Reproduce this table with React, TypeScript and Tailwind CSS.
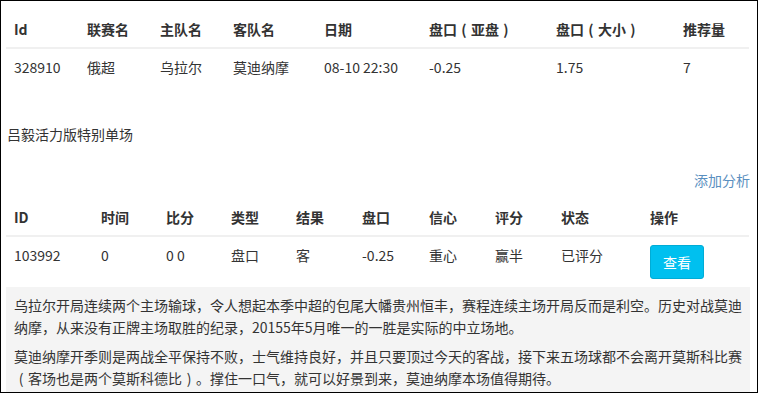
import React from "react";

const P = ({ c }: { c: string }) => (
  <span className="inline-block w-[1em] text-center">{c}</span>
);

const t1Cols = [73, 73, 73, 91, 105, 127, 127, 74];
const t1Head: React.ReactNode[] = [
  "Id",
  "联赛名",
  "主队名",
  "客队名",
  "日期",
  <>
    盘口<P c="(" />亚盘<P c=")" />
  </>,
  <>
    盘口<P c="(" />大小<P c=")" />
  </>,
  "推荐量",
];
const t1Row = ["328910", "俄超", "乌拉尔", "莫迪纳摩", "08-10 22:30", "-0.25", "1.75", "7"];

const t2Cols = [87, 65, 65, 65, 66, 67, 66, 66, 89, 107];
const t2Head = ["ID", "时间", "比分", "类型", "结果", "盘口", "信心", "评分", "状态", "操作"];
const t2Row = ["103992", "0", "0 0", "盘口", "客", "-0.25", "重心", "赢半", "已评分"];

export default function App() {
  return (
    <div className="h-[393px] w-[758px] overflow-hidden border border-black bg-white pl-[5px] pr-[7px] font-['Noto_Sans_CJK_SC',sans-serif] text-[14px] leading-5 text-[#333]">
      <table className="mt-[10px] w-[743px] table-fixed border-collapse">
        <colgroup>
          {t1Cols.map((w, i) => (
            <col key={i} style={{ width: w }} />
          ))}
        </colgroup>
        <thead>
          <tr className="border-b-2 border-[#f0f0f0]">
            {t1Head.map((h, i) => (
              <th key={i} className="whitespace-nowrap p-2 text-left font-bold">
                {h}
              </th>
            ))}
          </tr>
        </thead>
        <tbody>
          <tr>
            {t1Row.map((c, i) => (
              <td key={i} className="whitespace-nowrap p-2 align-top">
                {c}
              </td>
            ))}
          </tr>
        </tbody>
      </table>

      <div className="mt-[39px] pl-[1px]">吕毅活力版特别单场</div>

      <div className="mt-[26px] flex justify-end">
        <span className="text-[#5a8fc0]">添加分析</span>
      </div>

      <table className="mt-[9px] w-[743px] table-fixed border-collapse">
        <colgroup>
          {t2Cols.map((w, i) => (
            <col key={i} style={{ width: w }} />
          ))}
        </colgroup>
        <thead>
          <tr className="border-b-2 border-[#f0f0f0]">
            {t2Head.map((h) => (
              <th key={h} className="whitespace-nowrap p-2 text-left font-bold">
                {h}
              </th>
            ))}
          </tr>
        </thead>
        <tbody>
          <tr>
            {t2Row.map((c, i) => (
              <td key={i} className="whitespace-nowrap p-2 align-top">
                {c}
              </td>
            ))}
            <td className="p-2 align-top">
              <button className="rounded-[3px] border border-[#00acd6] bg-[#00c0ef] px-3 py-[6px] text-[14px] leading-5 text-white">
                查看
              </button>
            </td>
          </tr>
        </tbody>
      </table>

      <div className="w-[744px] bg-[#f4f4f4] px-2 pb-4 pt-[7px] leading-[22px]">
        <p className="mb-[7px]">
          乌拉尔开局连续两个主场输球，令人想起本季中超的包尾大幡贵州恒丰，赛程连续主场开局反而是利空。历史对战莫迪纳摩，从来没有正牌主场取胜的纪录，20155年5月唯一的一胜是实际的中立场地。
        </p>
        <p>
          莫迪纳摩开季则是两战全平保持不败，士气维持良好，并且只要顶过今天的客战，接下来五场球都不会离开莫斯科比赛
          <P c="(" />
          客场也是两个莫斯科德比
          <P c=")" />
          。撑住一口气，就可以好景到来，莫迪纳摩本场值得期待。
        </p>
      </div>
    </div>
  );
}
